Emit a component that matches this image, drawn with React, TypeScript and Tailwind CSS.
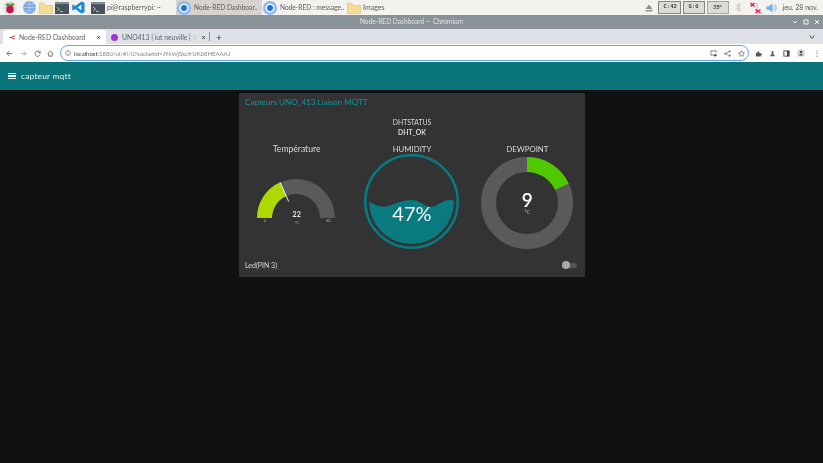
import React from "react";

const font = { fontFamily: '"Lato","Noto Sans",sans-serif' };

function Folder({ className = "" }: { className?: string }) {
  return (
    <svg viewBox="0 0 14 12" className={className}>
      <path d="M0.5 1.5 L0.5 11.5 L13.5 11.5 L13.5 3.5 L6 3.5 L4.5 1 L1 1 Z" fill="#f6dd94" stroke="#d9bd6c" strokeWidth="0.6" />
    </svg>
  );
}

function Term({ className = "" }: { className?: string }) {
  return (
    <svg viewBox="0 0 14 12" className={className}>
      <rect width="14" height="12" fill="#46525c" />
      <rect width="14" height="2.2" fill="#828d96" />
      <path d="M2 5 L4.5 7 L2 9 M5 9.5 H8" stroke="#dfe4e8" strokeWidth="0.7" fill="none" />
    </svg>
  );
}

function ChromiumIcon() {
  return (
    <svg viewBox="0 0 14 14" className="w-[14px] h-[14px] shrink-0">
      <circle cx="7" cy="7" r="7" fill="#8db8ee" />
      <circle cx="7" cy="7" r="4.6" fill="#f4f7fb" />
      <circle cx="7" cy="7" r="3" fill="#1f72dc" />
    </svg>
  );
}

function Stat({ left, right, w }: { left: string; right?: string; w: string }) {
  return (
    <div className={`${w} h-[13px] border border-[#858585] bg-[#dbdbd7] text-[#3a3a3a] flex items-center justify-between px-[5px] text-[5.5px] font-['Liberation_Mono',monospace] font-bold`}>
      <span>{left}</span>
      {right ? <span>{right}</span> : null}
    </div>
  );
}

function Taskbar() {
  return (
    <div className="h-[15px] bg-[#f3f2ef] flex items-center text-[7px] text-[#5a5a5a] shrink-0">
      <svg viewBox="0 0 14 14" className="w-[14px] h-[14px] ml-[3px] shrink-0">
        <circle cx="7" cy="7" r="7" fill="#e2e2e2" />
        <ellipse cx="7" cy="8.2" rx="3.7" ry="4" fill="#bd1548" />
        <ellipse cx="4.8" cy="3.6" rx="2.1" ry="1.3" fill="#4b9a35" />
        <ellipse cx="9.2" cy="3.6" rx="2.1" ry="1.3" fill="#4b9a35" />
      </svg>
      <svg viewBox="0 0 13 13" className="w-[13px] h-[13px] ml-[6px] shrink-0">
        <circle cx="6.5" cy="6.5" r="6.5" fill="#7fa9dc" />
        <path d="M0 6.5 H13 M6.5 0 V13 M2 2.5 Q6.5 5 11 2.5 M2 10.5 Q6.5 8 11 10.5" stroke="#c6daf2" strokeWidth="0.6" fill="none" />
      </svg>
      <Folder className="w-[14px] h-[12px] ml-[3px] shrink-0" />
      <Term className="w-[14px] h-[12px] ml-[2px] shrink-0" />
      <svg viewBox="0 0 14 14" className="w-[13px] h-[13px] ml-[3px] shrink-0">
        <path d="M10 0.5 L13.5 2 V12 L10 13.5 L3.5 8.5 L1.2 10.2 L0.3 9.6 V4.4 L1.2 3.8 L3.5 5.5 Z M10 4 L6 7 L10 10 Z" fill="#1f8ad2" fillRule="evenodd" />
      </svg>
      <Term className="w-[14px] h-[12px] ml-[6px] shrink-0" />
      <span className="ml-[2px] w-[69px] whitespace-nowrap">pi@raspberrypi: ~</span>
      <div className="w-[86px] h-[15px] bg-[#d6d3cf] flex items-center gap-[3px] pl-[1px] whitespace-nowrap text-[6.6px] shrink-0">
        <ChromiumIcon />
        <span>Node-RED Dashboar..</span>
      </div>
      <div className="flex items-center gap-[3px] w-[85px] whitespace-nowrap pl-[1px] text-[6.6px] shrink-0">
        <ChromiumIcon />
        <span>Node-RED : message..</span>
      </div>
      <Folder className="w-[14px] h-[12px] shrink-0" />
      <span className="ml-[2px]">Images</span>
      <div className="ml-auto flex items-center h-full pr-[5px]">
        <svg viewBox="0 0 8 8" className="w-[8px] h-[8px] mr-[5px]">
          <path d="M4 0.5 L7.5 5 H0.5 Z M0.5 6 H7.5 V7.5 H0.5 Z" fill="#8d8d8d" />
        </svg>
        <div className="flex gap-[2px]">
          <Stat left="C:" right="42" w="w-[23px]" />
          <Stat left="G:" right="0" w="w-[22px]" />
          <div className="w-[22px] h-[13px] border border-[#a5a5a5] bg-[#dbdbd7] text-[#3a3a3a] flex items-center justify-center text-[5.5px] font-bold">35°</div>
        </div>
        <svg viewBox="0 0 8 12" className="w-[7px] h-[11px] ml-[6px]">
          <path d="M1 3.2 L6.5 8.4 L4 11 V1 L6.5 3.6 L1 8.8" stroke="#c4c4c4" strokeWidth="1" fill="none" />
        </svg>
        <svg viewBox="0 0 11 12" className="w-[11px] h-[12px] ml-[8px]">
          <path d="M7 1 V11" stroke="#aaa" strokeWidth="0.8" />
          <path d="M0.5 1 L4.5 4.5 M4.5 1 L0.5 4.5 M5.5 7.5 L10.5 11 M10.5 7.5 L5.5 11" stroke="#e8174a" strokeWidth="1.5" />
        </svg>
        <svg viewBox="0 0 13 12" className="w-[12px] h-[12px] ml-[5px]">
          <path d="M0.5 4 H3 L7 1 V11 L3 8 H0.5 Z" fill="#6fb1ec" />
          <path d="M8.5 3.5 Q10 6 8.5 8.5 M10 2 Q12.4 6 10 10" stroke="#8dc2f0" strokeWidth="1" fill="none" />
        </svg>
        <span className="ml-[5px] whitespace-nowrap">jeu. 28 nov.</span>
      </div>
    </div>
  );
}

function Browser() {
  return (
    <div className="shrink-0">
      <div className="h-[14px] bg-[#8a9299] flex items-center justify-center relative text-[6.6px] text-[#dfe3e6]">
        Node-RED Dashboard — Chromium
        <div className="absolute right-[3px] top-[4px] flex gap-[5px] text-[#f0f2f4]">
          <svg viewBox="0 0 6 6" className="w-[6px] h-[6px]"><path d="M1 2 L3 4 L5 2" stroke="currentColor" strokeWidth="1" fill="none" /></svg>
          <svg viewBox="0 0 6 6" className="w-[6px] h-[6px]"><rect x="1" y="1" width="4" height="4" stroke="currentColor" fill="none" /></svg>
          <svg viewBox="0 0 6 6" className="w-[6px] h-[6px]"><path d="M1 1 L5 5 M5 1 L1 5" stroke="currentColor" strokeWidth="1" /></svg>
        </div>
      </div>
      <div className="h-[15px] bg-[#dee1e6] flex items-end text-[#5f6368] relative pl-[3px]">
        <div className="w-[103px] h-[14px] bg-white rounded-t-[4px] flex items-center pl-[5px] pr-[5px]">
          <svg viewBox="0 0 8 8" className="w-[8px] h-[7px] shrink-0">
            <path d="M1 4 H3.5 M3.5 4 L7 2 M3.5 4 L7 6" stroke="#d0434c" strokeWidth="1.2" fill="none" />
          </svg>
          <span className="ml-[3px] whitespace-nowrap text-[6.8px]">Node-RED Dashboard</span>
          <span className="ml-auto text-[#333] text-[8px] leading-none">×</span>
        </div>
        <div className="w-[103px] h-[14px] flex items-center pl-[5px] pr-[3px]">
          <span className="w-[7px] h-[7px] rounded-full bg-[#a033d6] shrink-0" />
          <span className="ml-[4px] whitespace-nowrap text-[6.8px]">UNO413 | iut neuville | <span className="text-[#c4c7cc]">Ir</span></span>
          <span className="ml-auto text-[#333] text-[8px] leading-none">×</span>
        </div>
        <div className="w-px h-[9px] bg-[#8f9398] mb-[3px]" />
        <span className="ml-[6px] h-[14px] flex items-center text-[#333] text-[10px]">+</span>
        <svg viewBox="0 0 8 8" className="absolute right-[8px] top-[5px] w-[6px] h-[6px]">
          <path d="M1 2 L4 6 L7 2" stroke="#444" strokeWidth="1.2" fill="none" />
        </svg>
      </div>
      <div className="h-[18px] bg-white flex items-center">
        <svg viewBox="0 0 8 8" className="w-[7px] h-[7px] ml-[6px] shrink-0"><path d="M7 4 H1 M4 1 L1 4 L4 7" stroke="#555" strokeWidth="0.9" fill="none" /></svg>
        <svg viewBox="0 0 8 8" className="w-[7px] h-[7px] ml-[7px] shrink-0"><path d="M1 4 H7 M4 1 L7 4 L4 7" stroke="#aaa" strokeWidth="0.9" fill="none" /></svg>
        <svg viewBox="0 0 8 8" className="w-[7px] h-[7px] ml-[7px] shrink-0"><path d="M6.8 3 A3 3 0 1 0 7 5 M7 1 V3.2 H4.8" stroke="#555" strokeWidth="0.9" fill="none" /></svg>
        <svg viewBox="0 0 8 8" className="w-[7px] h-[7px] ml-[6px] shrink-0"><path d="M1 4 L4 1 L7 4 M2 3.5 V7 H6 V3.5" stroke="#555" strokeWidth="0.9" fill="none" /></svg>
        <div className="ml-[6px] w-[689px] h-[16px] rounded-[8px] border-[1.5px] border-[#6aa3ec] flex items-center pl-[4px] text-[6px] text-[#888] shrink-0">
          <svg viewBox="0 0 8 8" className="w-[6px] h-[6px] mr-[3px]"><circle cx="4" cy="4" r="3.3" stroke="#555" strokeWidth="0.7" fill="none" /><path d="M4 3.4 V6 M4 2 V2.8" stroke="#555" strokeWidth="0.7" /></svg>
          <span className="text-[#444]">localhost</span>:1880/ui/#!/0?socketid=J9kWjSkcfrUKb8HEAAAJ
          <div className="ml-auto flex items-center gap-[7px] pr-[3px]">
            <svg viewBox="0 0 8 8" className="w-[7px] h-[7px]"><path d="M7 3 V1 H1 V6 H4" stroke="#555" strokeWidth="0.8" fill="none" /><circle cx="6" cy="6" r="1.5" fill="#555" /></svg>
            <svg viewBox="0 0 8 8" className="w-[7px] h-[7px]"><path d="M6.5 1.5 L1.5 4 L6.5 6.5" stroke="#555" strokeWidth="0.7" fill="none" /><circle cx="6.5" cy="1.5" r="1" fill="#555" /><circle cx="1.5" cy="4" r="1" fill="#555" /><circle cx="6.5" cy="6.5" r="1" fill="#555" /></svg>
            <svg viewBox="0 0 8 8" className="w-[7px] h-[7px]"><path d="M4 0.8 L5 3 L7.4 3.2 L5.6 4.8 L6.1 7.2 L4 6 L1.9 7.2 L2.4 4.8 L0.6 3.2 L3 3 Z" stroke="#555" strokeWidth="0.7" fill="none" /></svg>
          </div>
        </div>
        <div className="ml-[6px] flex items-center gap-[7px]">
          <svg viewBox="0 0 8 8" className="w-[7px] h-[7px]"><path d="M1 3 H3 V1.5 H4.5 V3 H6.5 V4.5 H8 V6 H6.5 V7.5 H1 Z" fill="#555" /></svg>
          <svg viewBox="0 0 8 8" className="w-[7px] h-[7px]"><path d="M3 1 H5 V4 L7 7 H1 L3 4 Z" fill="#4a6a9a" /></svg>
          <svg viewBox="0 0 8 8" className="w-[7px] h-[7px]"><rect x="1" y="1" width="6" height="6" stroke="#444" fill="none" /><rect x="4.5" y="1" width="2.5" height="6" fill="#444" /></svg>
          <svg viewBox="0 0 8 8" className="w-[8px] h-[8px]"><circle cx="4" cy="4" r="4" fill="#d5dbe6" /><circle cx="4" cy="3" r="1.3" fill="#444" /><path d="M1.8 6.4 Q4 3.8 6.2 6.4 Z" fill="#444" /></svg>
          <svg viewBox="0 0 4 8" className="w-[4px] h-[7px] ml-[3px]"><circle cx="2" cy="1" r="0.6" fill="#555" /><circle cx="2" cy="4" r="0.6" fill="#555" /><circle cx="2" cy="7" r="0.6" fill="#555" /></svg>
        </div>
      </div>
    </div>
  );
}

function polar(cx: number, cy: number, r: number, deg: number) {
  const a = ((deg - 90) * Math.PI) / 180;
  return [cx + r * Math.cos(a), cy + r * Math.sin(a)];
}

function Gauge() {
  const cx = 40, cy = 40, R = 39, r = 24;
  const sweep = -90 + 180 * (22 / 60);
  const [ax, ay] = polar(cx, cy, R, sweep);
  const [bx, by] = polar(cx, cy, r, sweep);
  const [nx, ny] = polar(cx, cy, 18, sweep);
  const [mx, my] = polar(cx, cy, 39, sweep);
  return (
    <svg viewBox="0 0 80 46" className="w-[80px] h-[46px] -ml-[1px]">
      <path d="M1 40 A39 39 0 0 1 79 40 H64 A24 24 0 0 0 16 40 Z" fill="#5a5a5a" />
      <path d={`M1 40 A39 39 0 0 1 ${ax} ${ay} L${bx} ${by} A24 24 0 0 0 16 40 Z`} fill="#add800" />
      <path d={`M${mx} ${my} L${nx} ${ny}`} stroke="#f2f2f2" strokeWidth="1" />
    </svg>
  );
}

function Donut() {
  const [ax, ay] = polar(46, 46, 46, 65);
  const [bx, by] = polar(46, 46, 31, 65);
  return (
    <svg viewBox="0 0 92 92" className="w-[92px] h-[92px]">
      <circle cx="46" cy="46" r="38.5" fill="none" stroke="#5a5a5a" strokeWidth="15" />
      <path d={`M46 0 A46 46 0 0 1 ${ax} ${ay} L${bx} ${by} A31 31 0 0 0 46 15 Z`} fill="#50c800" />
    </svg>
  );
}

function Liquid() {
  return (
    <svg viewBox="0 0 95 95" className="w-[95px] h-[95px]">
      <circle cx="47.5" cy="47.5" r="46.2" fill="none" stroke="#087a80" strokeWidth="2.6" />
      <path
        d="M5 47.7 C10 50 14 52.7 19 52.7 C28 52.7 36 46 47 46 C56 46 60 52.7 66 52.7 C74 52.7 78 46 86 46 C88 46 90 46.3 90 47.5 A42.5 42.5 0 0 1 5 47.7 Z"
        fill="#087a80"
      />
    </svg>
  );
}

export default function App() {
  return (
    <div className="w-[823px] h-[463px] bg-[#111111] flex flex-col overflow-hidden blur-[0.3px]" style={font}>
      <Taskbar />
      <Browser />
      <div className="h-[28px] bg-[#097479] flex items-center shrink-0">
        <div className="ml-[8px] w-[8px] flex flex-col gap-[1px]">
          <div className="h-[1.2px] bg-[#eef5f5]" />
          <div className="h-[1.2px] bg-[#eef5f5]" />
          <div className="h-[1.2px] bg-[#eef5f5]" />
        </div>
        <span className="ml-[5px] text-[8.4px] tracking-[0.2px] text-[#e8f2f2]">capteur mqtt</span>
      </div>
      <div className="flex-1 flex justify-center pt-[3px] pl-[1px]">
        <div className="w-[346px] h-[184px] bg-[#333333] flex flex-col text-[#d8d8d8]">
          <div className="h-[19px] pl-[6px] flex items-center text-[8.1px] text-[#0e979d]">Capteurs UNO_413 Liaison MQTT</div>
          <div className="flex flex-col items-center text-[6.8px] leading-[10px] mt-[5px] h-[26px]">
            <span>DHTSTATUS</span>
            <span className="font-bold">DHT_OK</span>
          </div>
          <div className="grid grid-cols-3 h-[110px]">
            <div className="flex flex-col items-center">
              <span className="text-[8.6px] leading-[12px]">Température</span>
              <div className="relative w-[80px] h-[54px] mt-[23px]">
                <Gauge />
                <span className="absolute left-0 right-0 top-[31px] text-center text-[7px] font-bold text-[#f0f0f0]">22</span>
                <span className="absolute left-[7px] top-[40px] text-[4px] text-[#aaa]">0</span>
                <span className="absolute left-0 right-0 top-[42px] text-center text-[4px] text-[#aaa]">°C</span>
                <span className="absolute right-[6px] top-[40px] text-[4px] text-[#aaa]">60</span>
              </div>
            </div>
            <div className="flex flex-col items-center">
              <span className="text-[7.8px] leading-[12px]">HUMIDITY</span>
              <div className="relative w-[95px] h-[95px] -mt-[1px]">
                <Liquid />
                <span className="absolute left-0 right-0 top-[49px] text-center leading-[20px] text-[20px] text-[#f4f4f4]">47%</span>
              </div>
            </div>
            <div className="flex flex-col items-center">
              <span className="text-[7.8px] leading-[12px]">DEWPOINT</span>
              <div className="relative w-[92px] h-[92px] mt-[2px]">
                <Donut />
                <div className="absolute inset-0 flex flex-col items-center justify-center gap-[1px]">
                  <span className="text-[19px] leading-[17px] font-semibold text-white">9</span>
                  <span className="text-[5px] leading-[6px] text-[#bbb]">°C</span>
                </div>
              </div>
            </div>
          </div>
          <div className="flex items-center justify-between flex-1 text-[7px] pl-[6px] pr-[8px]">
            <span>Led(PIN 3)</span>
            <div className="relative w-[15px] h-[5px] bg-[#555] rounded-full">
              <span className="absolute left-0 -top-[1.5px] w-[8px] h-[8px] rounded-full bg-[#a8a8a8]" />
            </div>
          </div>
        </div>
      </div>
    </div>
  );
}
